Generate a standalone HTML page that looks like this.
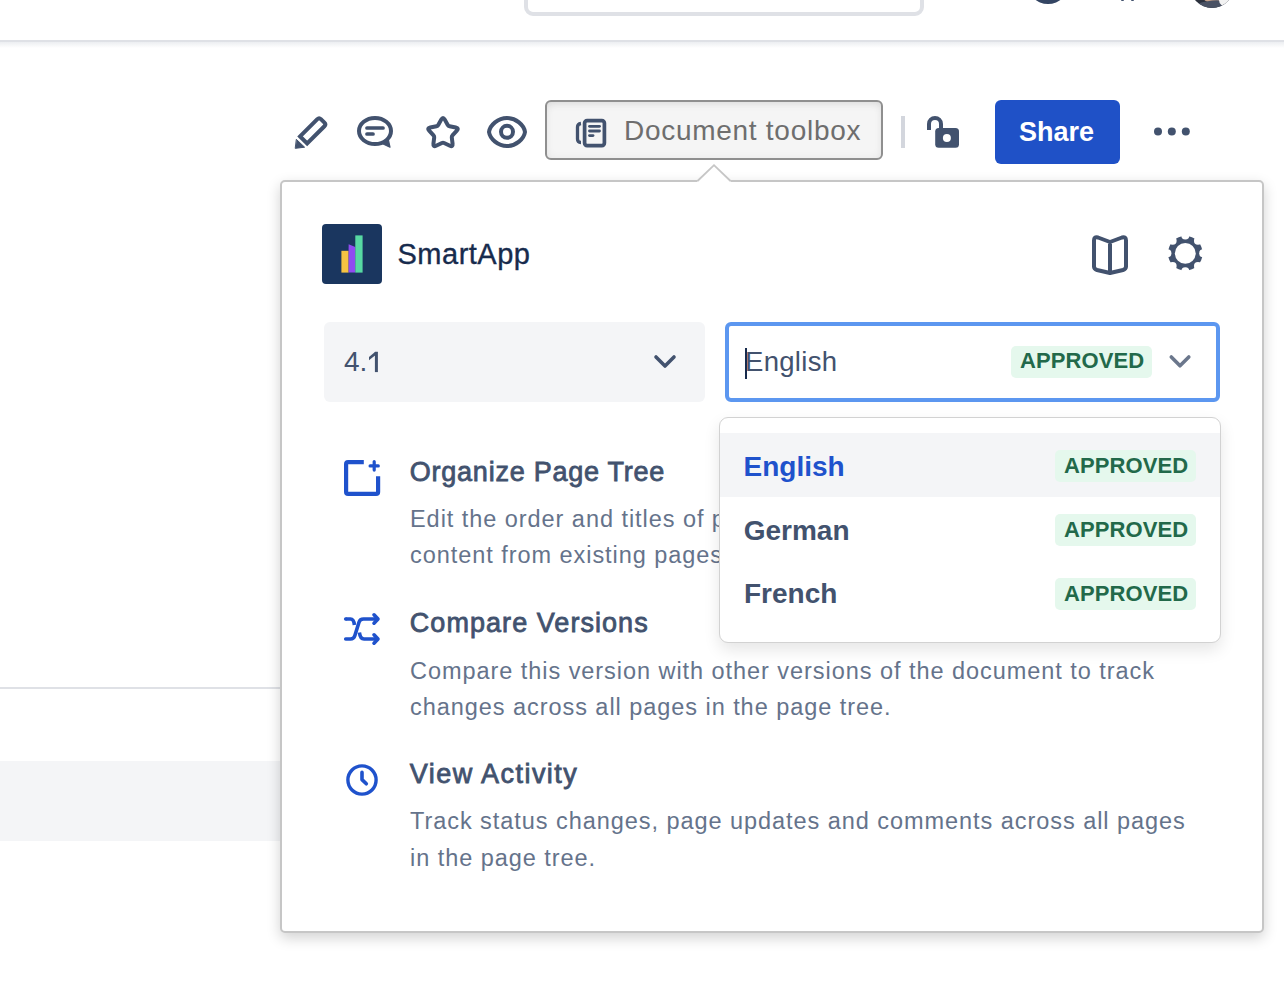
<!DOCTYPE html>
<html>
<head>
<meta charset="utf-8">
<style>
html,body{margin:0;padding:0;}
body{width:1284px;height:1006px;position:relative;overflow:hidden;background:#fff;font-family:"Liberation Sans",sans-serif;}
.a{position:absolute;}
.t{position:absolute;white-space:nowrap;line-height:1;}
</style>
</head>
<body>
<!-- header -->
<div class="a" style="left:524px;top:-20px;width:392px;height:28px;border:4px solid #dfe1e6;border-radius:9px;"></div>
<div class="a" style="left:1027.1px;top:-38.3px;width:42px;height:42px;border-radius:50%;background:#344563;"></div>
<div class="a" style="left:1121.2px;top:-1px;width:2.8px;height:2px;border-radius:1px;background:#42526e;"></div>
<div class="a" style="left:1131px;top:-1px;width:2.8px;height:2px;border-radius:1px;background:#42526e;"></div>
<div class="a" style="left:1189.5px;top:-37.1px;width:44.8px;height:44.8px;border-radius:50%;overflow:hidden;background:#2c313d;">
  <div class="a" style="left:13px;top:28px;width:22px;height:12px;border-radius:50%;background:#c9a48c;"></div>
  <div class="a" style="left:4px;top:38px;width:32px;height:12px;border-radius:40%;background:#4a5264;transform:rotate(-8deg);"></div>
  <div class="a" style="left:29px;top:30px;width:16px;height:14px;border-radius:50%;background:#f2f2f2;"></div>
</div>
<div class="a" style="left:0;top:40px;width:1284px;height:2px;background:#dfe1e6;"></div>
<div class="a" style="left:0;top:42px;width:1284px;height:6px;background:linear-gradient(#eceef1,#fff);"></div>

<!-- left page bits -->
<div class="a" style="left:0;top:687px;width:282px;height:2px;background:#dfe1e6;"></div>
<div class="a" style="left:0;top:761px;width:282px;height:80px;background:#f4f5f7;"></div>

<!-- toolbar -->
<div class="a" style="left:545px;top:100px;width:334px;height:56px;border:2px solid #8f8f8f;border-radius:6px;background:#f5f5f5;box-shadow:inset 0 5px 8px -3px rgba(0,0,0,0.08), inset 0 0 9px rgba(0,0,0,0.05);"></div>
<div class="t" style="left:624px;top:116.9px;font-size:28px;color:#6e6e6e;letter-spacing:0.72px;">Document toolbox</div>
<div class="a" style="left:901px;top:116px;width:4px;height:32px;background:#d3d6dd;"></div>
<div class="a" style="left:995px;top:100px;width:125px;height:64px;border-radius:6px;background:#1f51c7;"></div>
<div class="t" style="left:1019px;top:118.8px;font-size:27px;font-weight:700;color:#fff;">Share</div>

<!-- panel -->
<div class="a" style="left:280px;top:180px;width:980px;height:749px;border:2px solid #c6c6c6;border-radius:5px;background:#fff;box-shadow:0 5px 14px rgba(0,0,0,0.18);"></div>
<svg class="a" style="left:0;top:0" width="1284" height="1006">
  <polygon points="696,183 714,165 732,183" fill="#fff"/>
  <path d="M697.5,181 L714,165.2 L730.5,181" fill="none" stroke="#c6c6c6" stroke-width="1.8" stroke-linejoin="miter"/>
</svg>

<!-- logo -->
<div class="a" style="left:322px;top:224px;width:60px;height:60px;border-radius:4px;background:#1a365f;"></div>
<svg class="a" style="left:0;top:0" width="1284" height="1006">
  <rect x="341.4" y="250.8" width="7.2" height="21.8" fill="#f6c342"/>
  <polygon points="348.6,244.3 355.3,247 355.3,272.6 348.6,272.6" fill="#8f4cf0"/>
  <rect x="355.3" y="235.4" width="7.3" height="37.2" fill="#57d9a3"/>
</svg>
<div class="t" style="left:397.5px;top:240px;font-size:29px;color:#172b4d;letter-spacing:0.5px;-webkit-text-stroke:0.35px #172b4d;">SmartApp</div>

<!-- selects -->
<div class="a" style="left:324px;top:322px;width:381px;height:80px;border-radius:6px;background:#f4f5f7;"></div>
<div class="t" style="left:344px;top:348.4px;font-size:28px;color:#42526e;letter-spacing:0px;">4.</div>
<svg class="a" style="left:0;top:0" width="1284" height="1006"><path d="M376.4 352 V372.1" stroke="#42526e" stroke-width="3" fill="none"/><path d="M377.9 351.7 L375.2 351.7 L369 357 L369 360.2 L375 355.4 Z" fill="#42526e"/></svg>
<div class="a" style="left:725px;top:322px;width:487px;height:71.5px;border:4px solid #5c97f0;border-radius:6px;background:#fff;"></div>
<div class="a" style="left:745px;top:348.3px;width:2px;height:30.3px;background:#172b4d;"></div>
<div class="t" style="left:745px;top:348.4px;font-size:27.5px;color:#42526e;letter-spacing:0.3px;">English</div>
<div class="a" style="left:1011px;top:346px;width:141px;height:32px;border-radius:5px;background:#e5f8ed;"></div>
<div class="t" style="left:1020px;top:350.4px;font-size:22px;font-weight:700;color:#22694a;letter-spacing:0.1px;">APPROVED</div>

<!-- items -->
<div class="t" style="left:409.8px;top:459px;font-size:27px;font-weight:400;color:#42526e;letter-spacing:0.76px;-webkit-text-stroke:0.8px #42526e;">Organize Page Tree</div>
<div class="t" style="left:410px;top:500.7px;font-size:23.5px;line-height:36.5px;color:#65738b;letter-spacing:0.95px;">Edit the order and titles of pages in the page tree and create new<br>content from existing pages.</div>
<div class="t" style="left:409.8px;top:609.5px;font-size:27px;font-weight:400;color:#42526e;letter-spacing:1.05px;-webkit-text-stroke:0.8px #42526e;">Compare Versions</div>
<div class="t" style="left:410px;top:652.6px;font-size:23.5px;line-height:36.5px;color:#65738b;letter-spacing:0.95px;">Compare this version with other versions of the document to track<br>changes across all pages in the page tree.</div>
<div class="t" style="left:409.8px;top:760.5px;font-size:27px;font-weight:400;color:#42526e;letter-spacing:1.45px;-webkit-text-stroke:0.8px #42526e;">View Activity</div>
<div class="t" style="left:410px;top:803px;font-size:23.5px;line-height:36.5px;color:#65738b;letter-spacing:0.95px;">Track status changes, page updates and comments across all pages<br>in the page tree.</div>

<!-- icons -->
<svg class="a" style="left:0;top:0" width="1284" height="1006" fill="none" stroke-linecap="round" stroke-linejoin="round">
  <!-- pencil -->
  <g stroke="#42526e" stroke-width="4">
    <path d="M-5 13.13 L-5 -11.3 Q-5 -13.8 -2.5 -13.8 L2.5 -13.8 Q5 -13.8 5 -11.3 L5 13.13 Z" stroke-linejoin="miter" transform="translate(312.9,130.7) rotate(45)"/>
  </g>
  <polygon points="296.6,139.6 304.6,147.2 295.6,148.3" fill="#42526e" stroke="#42526e" stroke-width="1" stroke-linejoin="round"/>
  <!-- comment -->
  <g stroke="#42526e" stroke-width="4">
    <ellipse cx="375" cy="131" rx="16" ry="13"/>
    <line x1="367" y1="128" x2="383" y2="128" stroke-width="3.7"/>
    <line x1="367" y1="134" x2="373" y2="134" stroke-width="3.7"/>
  </g>
  <polygon points="381.5,143.2 390,147.2 388.3,139.5" fill="#42526e" stroke="#42526e" stroke-width="1.2" stroke-linejoin="round"/>
  <!-- star -->
  <path stroke="#42526e" stroke-width="4" d="M441.35 119.37 Q443.00 116.40 444.65 119.37 L447.77 124.99 Q448.35 126.04 449.53 126.27 L455.83 127.50 Q459.17 128.15 456.85 130.63 L452.47 135.33 Q451.65 136.21 451.80 137.40 L452.58 143.78 Q452.99 147.15 449.91 145.72 L444.09 143.01 Q443.00 142.50 441.91 143.01 L436.09 145.72 Q433.01 147.15 433.42 143.78 L434.20 137.40 Q434.35 136.21 433.53 135.33 L429.15 130.63 Q426.83 128.15 430.17 127.50 L436.47 126.27 Q437.65 126.04 438.23 124.99 Z"/>
  <!-- eye -->
  <g stroke="#42526e" stroke-width="4">
    <path d="M489 132 C490 125 498 118 507 118 C516 118 524 125 525 132 C524 139 516 146 507 146 C498 146 490 139 489 132 Z"/>
    <circle cx="507" cy="131.8" r="6"/>
  </g>
  <!-- doc icon -->
  <g stroke="#42526e">
    <rect x="584.6" y="120.6" width="19.8" height="25" rx="2.5" stroke-width="3.7"/>
    <path d="M581 123.5 Q577.5 124 577.5 127 V139 Q577.5 142.5 581 142.5" stroke-width="3.3" stroke-linecap="butt"/>
    <line x1="589.5" y1="126.3" x2="599.5" y2="126.3" stroke-width="2.8"/>
    <line x1="589.5" y1="131" x2="599.5" y2="131" stroke-width="2.8"/>
    <line x1="589.5" y1="135.6" x2="593" y2="135.6" stroke-width="2.8"/>
  </g>
  <!-- lock -->
  <path d="M929 130 V124 A6 6 0 0 1 941 124 V130" stroke="#42526e" stroke-width="4" stroke-linecap="butt"/>
  <rect x="935.2" y="128" width="23.8" height="19.7" rx="3.5" fill="#42526e"/>
  <circle cx="946.9" cy="137.9" r="4" fill="#fff"/>
  <!-- dots -->
  <circle cx="1158" cy="131.6" r="4" fill="#42526e"/>
  <circle cx="1171.8" cy="131.6" r="4" fill="#42526e"/>
  <circle cx="1185.8" cy="131.6" r="4" fill="#42526e"/>
  <!-- book -->
  <path transform="translate(0,0.5)" d="M1110 241.5 L1098 237 Q1094 235.8 1094 240 V266 Q1094 268.5 1097 269.5 L1110 272.5 L1123 269.5 Q1126 268.5 1126 266 V240 Q1126 235.8 1122 237 Z M1110 241.5 V272" stroke="#42526e" stroke-width="4"/>
  <!-- gear -->
  <g transform="translate(1185.3,253.3)" stroke="none">
    <circle r="17.3" fill="#42526e"/>
    <g fill="#fff"><circle cx="0.00" cy="-17.90" r="4"/><circle cx="12.66" cy="-12.66" r="4"/><circle cx="17.90" cy="-0.00" r="4"/><circle cx="12.66" cy="12.66" r="4"/><circle cx="0.00" cy="17.90" r="4"/><circle cx="-12.66" cy="12.66" r="4"/><circle cx="-17.90" cy="0.00" r="4"/><circle cx="-12.66" cy="-12.66" r="4"/></g>
    <circle r="10.4" fill="#fff"/>
  </g>
  <!-- version chevron -->
  <path d="M656 357 L665 366 L674 357" stroke="#42526e" stroke-width="3.6"/>
  <!-- lang chevron -->
  <path d="M1171.3 357 L1180 365.8 L1188.8 357" stroke="#6b778c" stroke-width="3.6"/>
  <!-- organize icon -->
  <g stroke="#1f52cc" stroke-width="4.2" stroke-linecap="butt" stroke-linejoin="round">
    <path d="M363.8 462.2 H348.1 Q346.1 462.2 346.1 464.2 V491.9 Q346.1 493.9 348.1 493.9 H376.1 Q378.1 493.9 378.1 491.9 V476.2"/>
  </g>
  <g stroke="#1f52cc" stroke-width="3.2">
    <line x1="370.1" y1="465.9" x2="378.3" y2="465.9"/>
    <line x1="374.2" y1="461.7" x2="374.2" y2="470.1"/>
  </g>
  <!-- compare icon -->
  <g stroke="#1f52cc" stroke-width="3.6">
    <path d="M345.7 619 H350.5 Q353.8 619 354.4 625" stroke-linecap="butt"/><circle cx="345.7" cy="619" r="1.8" fill="#1f52cc" stroke="none"/>
    <path d="M345.7 639 H350.5 Q353.8 639 354.8 635.8 L359 622.2 Q360 619 363.5 619 H377"/>
    <path d="M359.4 632.5 Q360.2 639 364 639 H377" stroke-linecap="butt"/>
    <path d="M374 614.8 L378 619 L374 623.2"/>
    <path d="M374 634.8 L378 639 L374 643.2"/>
  </g>
  <!-- clock -->
  <g stroke="#1f52cc" stroke-width="3.6">
    <circle cx="362" cy="780" r="14.1" stroke-width="3.4"/>
    <path d="M362 772.4 V779.6 L366.3 783.8"/>
  </g>
</svg>

<!-- dropdown -->
<div class="a" style="left:719px;top:416.5px;width:500px;height:224.5px;border:1.5px solid #d2d2d2;border-radius:9px;background:#fff;box-shadow:0 7px 16px rgba(0,0,0,0.10);overflow:hidden;">
  <div class="a" style="left:0;top:15.5px;width:100%;height:64px;background:#f4f5f7;"></div>
</div>
<div class="t" style="left:743.5px;top:453px;font-size:28px;font-weight:700;color:#1f52cc;">English</div>
<div class="t" style="left:743.7px;top:516.7px;font-size:28px;font-weight:700;color:#42526e;">German</div>
<div class="t" style="left:744px;top:580.4px;font-size:28px;font-weight:700;color:#42526e;">French</div>
<div class="a" style="left:1055px;top:450px;width:141px;height:32px;border-radius:5px;background:#e5f8ed;"></div>
<div class="a" style="left:1055px;top:514px;width:141px;height:32px;border-radius:5px;background:#e5f8ed;"></div>
<div class="a" style="left:1055px;top:578px;width:141px;height:32px;border-radius:5px;background:#e5f8ed;"></div>
<div class="t" style="left:1064px;top:455px;font-size:22px;font-weight:700;color:#22694a;letter-spacing:0.1px;">APPROVED</div>
<div class="t" style="left:1064px;top:519px;font-size:22px;font-weight:700;color:#22694a;letter-spacing:0.1px;">APPROVED</div>
<div class="t" style="left:1064px;top:583px;font-size:22px;font-weight:700;color:#22694a;letter-spacing:0.1px;">APPROVED</div>
</body>
</html>
